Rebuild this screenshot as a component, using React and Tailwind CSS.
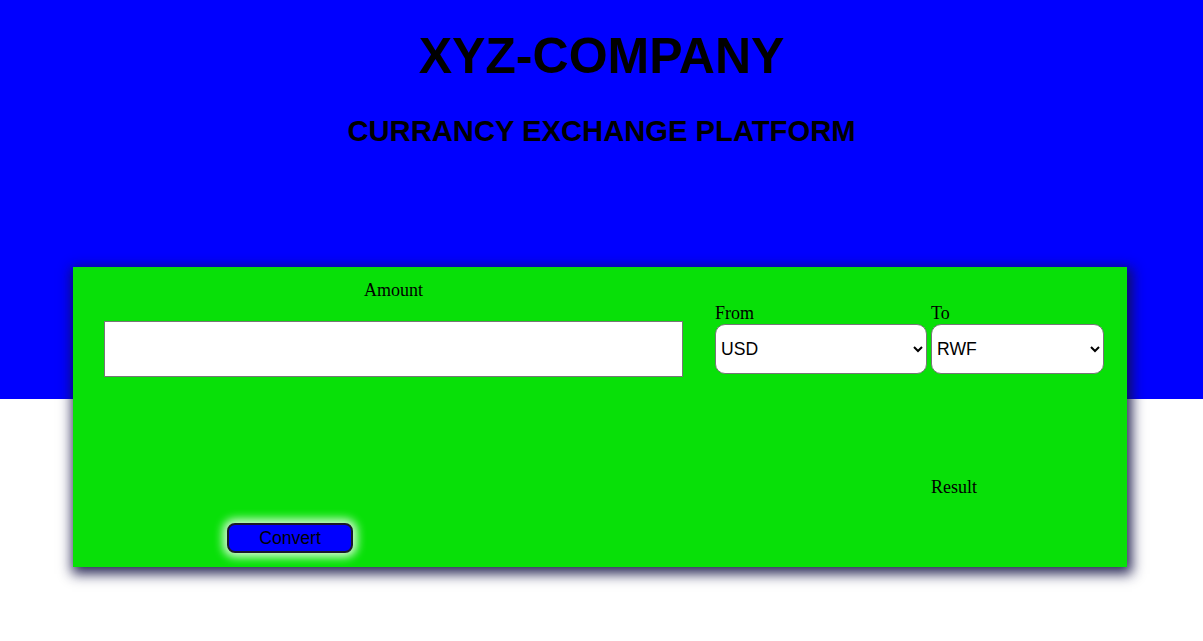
export default function App() {
    return (
        <div className="min-h-screen bg-white font-['Liberation_Sans',Arial,sans-serif] text-black">
            {/* Header */}
            <header className="h-[399px] bg-[#0000ff] flex flex-col items-center pt-[27px]">
                <h1 className="text-[50px] font-bold leading-[58px]">XYZ-COMPANY</h1>
                <h2 className="mt-[30px] text-[29.2px] font-bold leading-[33px]">CURRANCY EXCHANGE PLATFORM</h2>
            </header>

            {/* Converter card */}
            <div className="relative ml-[73px] -mt-[132px] w-[1054px] h-[300px] bg-[#08e008] shadow-[2px_4px_12px_3px_rgba(20,20,70,0.9)] flex flex-col font-['Liberation_Serif','Times_New_Roman',serif]">
                <div className="flex items-start h-[110px]">
                    <div className="ml-[31px] w-[579px] flex flex-col items-center pt-[13px]">
                        <label className="text-[18px] leading-[20px]">Amount</label>
                        <input type="text" className="mt-[21px] w-[579px] h-[56px] bg-white border border-[#767676] outline-none" />
                    </div>

                    <div className="ml-[32px] pt-[36px] flex gap-[4px]">
                        <div className="flex flex-col">
                            <label className="text-[18px] leading-[20px]">From</label>
                            <select defaultValue="USD" className="mt-[1px] w-[212px] h-[50px] bg-white border border-[#767676] rounded-[10px] pl-[1px] pr-[2px] text-[17.6px] font-['Liberation_Sans',Arial,sans-serif]">
                                <option>USD</option>
                                <option>RWF</option>
                                <option>EUR</option>
                            </select>
                        </div>
                        <div className="flex flex-col">
                            <label className="text-[18px] leading-[20px]">To</label>
                            <select defaultValue="RWF" className="mt-[1px] w-[173px] h-[50px] bg-white border border-[#767676] rounded-[10px] pl-[1px] pr-[2px] text-[17.6px] font-['Liberation_Sans',Arial,sans-serif]">
                                <option>RWF</option>
                                <option>USD</option>
                                <option>EUR</option>
                            </select>
                        </div>
                    </div>
                </div>

                <div className="ml-[858px] mt-[100px] text-[18px] leading-[20px]">Result</div>

                <div className="ml-[154px] mt-[26px]">
                    <button className="w-[126px] h-[30px] bg-[#0000ff] border-2 border-[#1a1a2a] rounded-[8px] text-[17.6px] leading-none pt-[2px] font-['Liberation_Sans',Arial,sans-serif] shadow-[0_0_10px_4px_rgba(255,255,255,0.85)]">
                        Convert
                    </button>
                </div>
            </div>
        </div>
    );
}
